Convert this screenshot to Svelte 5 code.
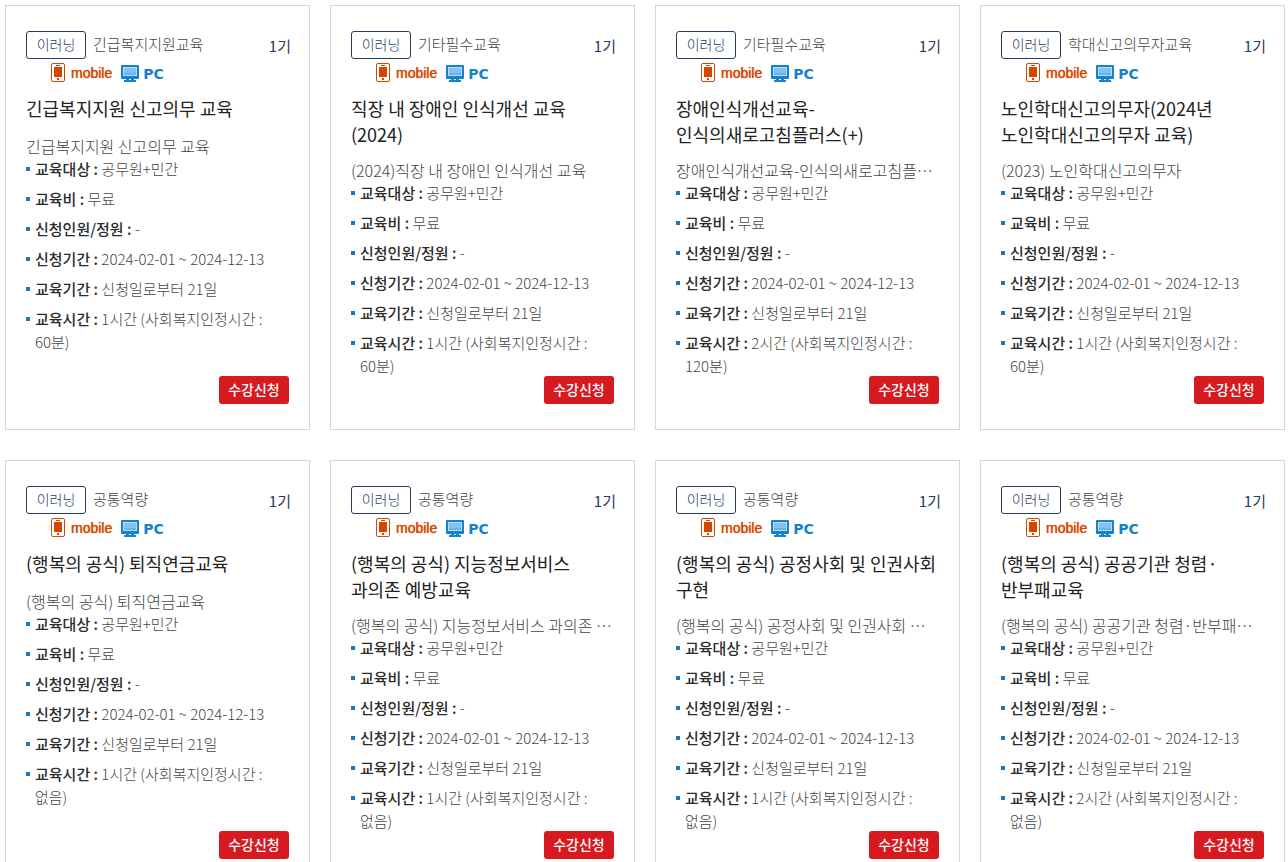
<script>
  const courses = [
    { category: '긴급복지지원교육', title: '긴급복지지원 신고의무 교육', desc: '긴급복지지원 신고의무 교육', hours: '1시간', credit: '60분' },
    { category: '기타필수교육', title: '직장 내 장애인 인식개선 교육(2024)', desc: '(2024)직장 내 장애인 인식개선 교육', hours: '1시간', credit: '60분' },
    { category: '기타필수교육', title: '장애인식개선교육-인식의새로고침플러스(+)', desc: '장애인식개선교육-인식의새로고침플러스(+)', hours: '2시간', credit: '120분' },
    { category: '학대신고의무자교육', title: '노인학대신고의무자(2024년 노인학대신고의무자 교육)', desc: '(2023) 노인학대신고의무자', hours: '1시간', credit: '60분' },
    { category: '공통역량', title: '(행복의 공식) 퇴직연금교육', desc: '(행복의 공식) 퇴직연금교육', hours: '1시간', credit: '없음' },
    { category: '공통역량', title: '(행복의 공식) 지능정보서비스 과의존 예방교육', desc: '(행복의 공식) 지능정보서비스 과의존 예방교육', hours: '1시간', credit: '없음' },
    { category: '공통역량', title: '(행복의 공식) 공정사회 및 인권사회 구현', desc: '(행복의 공식) 공정사회 및 인권사회 구현', hours: '1시간', credit: '없음' },
    { category: '공통역량', title: '(행복의 공식) 공공기관 청렴·반부패교육', desc: '(행복의 공식) 공공기관 청렴·반부패교육', hours: '2시간', credit: '없음' }
  ];

  const details = (course) => [
    ['교육대상', '공무원+민간'],
    ['교육비', '무료'],
    ['신청인원/정원', '-'],
    ['신청기간', '2024-02-01 ~ 2024-12-13'],
    ['교육기간', '신청일로부터 21일'],
    ['교육시간', `${course.hours} (사회복지인정시간 : ${course.credit})`]
  ];
</script>

<main class="courses">
  {#each courses as course}
    <article class="card">
      <header class="head">
        <span class="badge">이러닝</span>
        <span class="category">{course.category}</span>
        <span class="term">1기</span>
      </header>
      <div class="devices">
        <span class="device mobile">
          <svg width="14" height="20" viewBox="0 0 14 20" aria-hidden="true">
            <rect x="0.5" y="0.5" width="13" height="18" rx="1.5" fill="#fff" stroke="#d64500" />
            <path d="M5 2h4v1H5zM3 4h8v10H3zM6 15h2v2H6z" fill="#d64500" />
          </svg>
          mobile
        </span>
        <span class="device pc">
          <svg width="18" height="18" viewBox="0 0 18 18" aria-hidden="true">
            <rect width="18" height="14" rx="1" fill="#1482cd" />
            <path d="M2 2h14v9H2z" fill="#b9dcf6" />
            <path d="M3 3h12v5H3z" fill="#84c1ef" />
            <path d="M3 8h12v2H3z" fill="#6cb2e8" />
            <path d="M5 14h3v1h2v-1h3v1h2v2H3v-2h2z" fill="#1482cd" />
          </svg>
          PC
        </span>
      </div>
      <h2 class="title">{course.title}</h2>
      <p class="desc">{course.desc}</p>
      <ul class="details">
        {#each details(course) as [label, value]}
          <li><strong>{label} :</strong> {value}</li>
        {/each}
      </ul>
      <button class="apply" type="button">수강신청</button>
    </article>
  {/each}
</main>

<style>
  :global(body) {
    margin: 0;
    background: #fff;
  }
  .courses {
    display: grid;
    grid-template-columns: repeat(4, minmax(0, 1fr));
    gap: 30px 20px;
    padding: 5px 3px 30px 5px;
    font-family: "Noto Sans CJK KR", sans-serif;
    font-weight: 300;
    color: #444;
    word-break: keep-all;
  }
  .card {
    display: flex;
    flex-direction: column;
    box-sizing: border-box;
    min-height: 425px;
    padding: 25px 20px;
    border: 1px solid #d7d7d7;
  }
  .head {
    display: flex;
    align-items: flex-start;
    height: 28px;
    font-size: 15px;
    line-height: 26px;
  }
  .badge {
    box-sizing: border-box;
    width: 60px;
    padding-bottom: 2px;
    border: 1px solid #293b5a;
    border-radius: 3px;
    color: #293b5a;
    font-size: 14px;
    line-height: 24px;
    text-align: center;
  }
  .category {
    margin-left: 7px;
  }
  .term {
    margin: 0 -2px 0 auto;
    padding-top: 2px;
    color: #293b5a;
    font-weight: 400;
  }
  .devices {
    display: flex;
    gap: 9px;
    height: 20px;
    margin: 4px 0 12px 25px;
  }
  .device {
    display: flex;
    align-items: center;
    gap: 6px;
    line-height: 20px;
  }
  .mobile {
    color: #d64500;
    font-family: "Liberation Sans", sans-serif;
    font-size: 14px;
    text-shadow: 0 0 1px #d64500;
  }
  .pc {
    gap: 4px;
    padding-top: 2px;
    color: #1482cd;
    font-family: "DejaVu Sans", sans-serif;
    font-size: 14px;
    font-weight: 700;
  }
  .title {
    min-height: 28px;
    margin: 0 0 12px;
    color: #222;
    font-size: 18px;
    font-weight: 400;
    line-height: 26px;
  }
  .desc {
    margin: 0;
    overflow: hidden;
    font-size: 16px;
    line-height: 22px;
    text-overflow: ellipsis;
    white-space: nowrap;
  }
  .details {
    display: grid;
    gap: 7px;
    margin: 0 0 -4px;
    padding: 0;
    font-size: 15px;
    line-height: 23px;
    list-style: none;
  }
  .details li {
    padding-left: 9px;
    background: linear-gradient(#1678c2, #1678c2) 0 10px / 4px 4px no-repeat;
  }
  .details strong {
    color: #2b2b2b;
    font-weight: 500;
  }
  .apply {
    align-self: flex-end;
    width: 70px;
    height: 28px;
    margin-top: auto;
    padding: 0 0 2px;
    border: 0;
    border-radius: 3px;
    background: #d71920;
    color: #fff;
    font: 500 14px/26px "Noto Sans CJK KR", sans-serif;
    cursor: pointer;
  }
</style>
